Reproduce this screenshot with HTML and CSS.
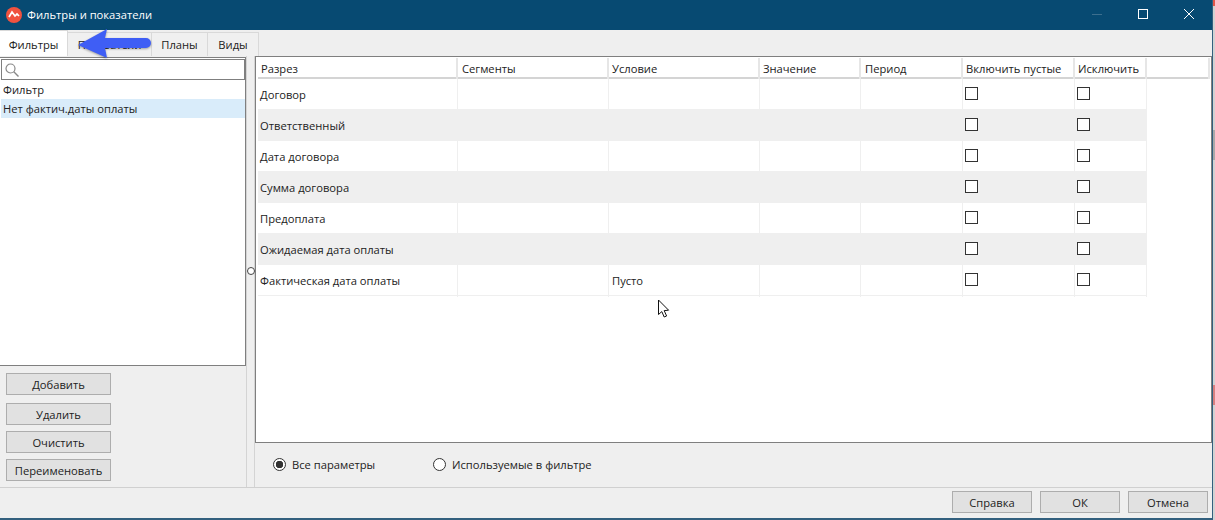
FILE: index.html
```html
<!DOCTYPE html>
<html lang="ru">
<head>
  <meta charset="UTF-8" />
  <title>Фильтры и показатели</title>
  <link rel="stylesheet" href="styles.css">
</head>
<body>
  <div class="window">
    <div class="titlebar">
      <svg class="app-icon" width="16" height="16" viewBox="0 0 16 16">
        <circle cx="8" cy="8" r="8" fill="#f0523f"/>
        <polyline points="3,10 6,5 9,9 11,7 13,9" fill="none" stroke="#fff" stroke-width="1.7"/>
      </svg>
      <span class="title">Фильтры и показатели</span>
      <div class="win-controls">
        <svg class="win-btn" width="46" height="30" viewBox="0 0 46 30"><line x1="18" y1="14.5" x2="28" y2="14.5" stroke="#3d6f8e"/></svg>
        <svg class="win-btn" width="46" height="30" viewBox="0 0 46 30"><rect x="18.5" y="9.5" width="9" height="9" fill="none" stroke="#fff"/></svg>
        <svg class="win-btn" width="46" height="30" viewBox="0 0 46 30"><path d="M18 9l10 10M28 9L18 19" fill="none" stroke="#fff"/></svg>
      </div>
    </div>

    <div class="tabs">
      <div class="tab active tab-filters">Фильтры</div>
      <div class="tab tab-metrics">Показатели</div>
      <div class="tab tab-plans">Планы</div>
      <div class="tab tab-views">Виды</div>
    </div>

    <div class="main">
      <div class="left">
        <div class="list-box">
          <div class="search">
            <svg width="14" height="14" viewBox="0 0 14 14"><circle cx="5.5" cy="5.5" r="4.5" fill="none" stroke="#888" stroke-width="1.2"/><line x1="8.8" y1="8.8" x2="13.5" y2="13.5" stroke="#888" stroke-width="1.4"/></svg>
          </div>
          <div class="list-item">Фильтр</div>
          <div class="list-item selected">Нет фактич.даты оплаты</div>
        </div>
        <div class="list-buttons">
          <button class="btn btn-add">Добавить</button>
          <button class="btn">Удалить</button>
          <button class="btn">Очистить</button>
          <button class="btn">Переименовать</button>
        </div>
      </div>

      <div class="sash"><span class="sash-grip"></span></div>

      <div class="right">
        <div class="table-box">
          <div class="grid grid-head">
            <div>Разрез</div>
            <div class="head-wide">Сегменты</div>
            <div>Условие</div>
            <div>Значение</div>
            <div class="head-wide">Период</div>
            <div>Включить пустые</div>
            <div>Исключить</div>
            <div></div>
          </div>
          <div class="grid row">
            <div>Договор</div><div></div><div></div><div></div><div></div>
            <div><span class="check"></span></div><div><span class="check"></span></div>
          </div>
          <div class="grid row alt">
            <div>Ответственный</div><div></div><div></div><div></div><div></div>
            <div><span class="check"></span></div><div><span class="check"></span></div>
          </div>
          <div class="grid row">
            <div>Дата договора</div><div></div><div></div><div></div><div></div>
            <div><span class="check"></span></div><div><span class="check"></span></div>
          </div>
          <div class="grid row alt">
            <div>Сумма договора</div><div></div><div></div><div></div><div></div>
            <div><span class="check"></span></div><div><span class="check"></span></div>
          </div>
          <div class="grid row">
            <div>Предоплата</div><div></div><div></div><div></div><div></div>
            <div><span class="check"></span></div><div><span class="check"></span></div>
          </div>
          <div class="grid row alt">
            <div>Ожидаемая дата оплаты</div><div></div><div></div><div></div><div></div>
            <div><span class="check"></span></div><div><span class="check"></span></div>
          </div>
          <div class="grid row">
            <div>Фактическая дата оплаты</div><div></div><div>Пусто</div><div></div><div></div>
            <div><span class="check"></span></div><div><span class="check"></span></div>
          </div>
        </div>
        <div class="radios">
          <label class="radio-label radio-all"><span class="radio on"></span>Все параметры</label>
          <label class="radio-label"><span class="radio"></span>Используемые в фильтре</label>
        </div>
      </div>
    </div>

    <div class="footer">
      <button class="btn btn-foot">Справка</button>
      <button class="btn btn-foot">ОК</button>
      <button class="btn btn-foot">Отмена</button>
    </div>
  </div>

  <!-- стрелка и курсор поверх окна -->
  <svg class="arrow" width="75" height="32" viewBox="0 0 75 32">
    <path d="M1 17L30 1L28 10L69 10A5 5 0 0 1 69 20L28 20L30 30Z" fill="#3f5ef5"/>
  </svg>
  <svg class="cursor" width="13" height="20" viewBox="0 0 13 20">
    <path d="M1.5 1L1.5 15.5L4.8 12.6L7.2 18L9.6 17L7.2 11.6L11.6 11.2Z" fill="#fff" stroke="#111" stroke-width="1"/>
  </svg>
</body>
</html>
```
FILE: styles.css
```css
* {
  box-sizing: border-box;
  margin: 0;
  padding: 0;
}

html, body {
  width: 1215px;
  height: 520px;
  overflow: hidden;
}

body {
  position: relative;
  background: linear-gradient(to bottom, #e2574a 0, #e2574a 6px, #d2d2d2 6px, #d2d2d2 130px, #a9a9a9 130px, #a9a9a9 160px, #d2d2d2 160px, #d2d2d2 385px, #d98080 385px, #d98080 405px, #d2d2d2 405px);
  font-family: 'Open Sans', 'Noto Sans', sans-serif;
  font-size: 11.2px;
  color: #222;
}

.window {
  width: 1213px;
  height: 520px;
  display: flex;
  flex-direction: column;
  background-color: #efefef;
  border-right: 1px solid #33607e;
  border-bottom: 2px solid #33607e;
}

.titlebar {
  height: 30px;
  flex: none;
  display: flex;
  align-items: center;
  padding-left: 6px;
  background-color: #074a72;
  color: #fff;
}

.app-icon {
  margin-right: 5px;
}

.title {
  margin-bottom: 2px;
}

.win-controls {
  display: flex;
  margin-left: auto;
}

.win-btn {
  display: block;
}

.tabs {
  height: 26px;
  flex: none;
  display: flex;
  align-items: flex-end;
}

.tab {
  height: 24px;
  line-height: 24px;
  text-align: center;
  background-color: #f0f0f0;
  border: 1px solid #d9d9d9;
  border-bottom: none;
  border-left: none;
}

.tab.active {
  height: 26px;
  line-height: 28px;
  background-color: #fff;
}

.tab-filters { width: 68px; }
.tab-metrics { width: 84px; }
.tab-plans { width: 56px; }
.tab-views { width: 51px; }

.main {
  flex: 1;
  display: flex;
  min-height: 0;
}

.left {
  width: 247px;
  flex: none;
  display: flex;
  flex-direction: column;
  border-right: 1px solid #d4d4d4;
}

.list-box {
  height: 309px;
  flex: none;
  margin-top: 1px;
  padding: 1px 0 0 0;
  background-color: #fff;
  border: 1px solid #7f7f7f;
  border-left: none;
}

.search {
  height: 21px;
  display: flex;
  align-items: center;
  padding-left: 3px;
  border: 1px solid #7f7f7f;
  margin-left: 1px;
  margin-bottom: 1px;
}

.list-item {
  height: 18px;
  line-height: 18px;
  padding-left: 2px;
  margin-left: 1px;
}

.list-item.selected {
  height: 19px;
  line-height: 20px;
  background-color: #d9ecfa;
}

.list-buttons {
  display: flex;
  flex-direction: column;
  align-items: flex-start;
  gap: 6px;
  padding: 7px 0 0 6px;
}

.btn {
  width: 105px;
  height: 22px;
  font-family: inherit;
  font-size: 11.2px;
  color: #222;
  background-color: #e1e1e1;
  border: 1px solid #adadad;
}

.btn-add {
  margin-bottom: 2px;
}

.sash {
  width: 8px;
  flex: none;
  position: relative;
}

.sash-grip {
  position: absolute;
  left: 0;
  top: 211px;
  width: 8px;
  height: 8px;
  border: 1px solid #444;
  border-radius: 50%;
  background-color: #fff;
}

.right {
  flex: 1;
  display: flex;
  flex-direction: column;
  min-width: 0;
  border-left: 1px solid #d4d4d4;
  margin-left: -1px;
}

.table-box {
  height: 387px;
  flex: none;
  padding: 1px 1px 0 2px;
  background-color: #fff;
  border: 1px solid #7f7f7f;
}

.grid {
  display: grid;
  grid-template-columns: 200px 151px 151px 101px 102px 112px 72px 63px;
}

.grid-head {
  height: 21px;
  line-height: 21px;
  border-bottom: 2px solid #d4d4d4;
}

.grid-head > div {
  padding-left: 3px;
  border-right: 2px solid #e6e6e6;
}

.grid-head > .head-wide {
  padding-left: 4px;
}

.row {
  height: 31px;
  line-height: 32px;
  width: 889px;
  grid-template-columns: 200px 151px 151px 101px 102px 112px 72px;
  border-bottom: 1px solid #efefef;
}

.row > div {
  padding-left: 2px;
  border-right: 1px solid #efefef;
}

.row > div:nth-child(3) {
  padding-left: 3px;
}

.row.alt {
  background-color: #efefef;
}

.check {
  display: block;
  width: 13px;
  height: 13px;
  margin-top: 8px;
  background-color: #fff;
  border: 1px solid #333;
}

.radios {
  flex: 1;
  display: flex;
  align-items: center;
  padding: 0 0 2px 18px;
}

.radio-label {
  display: flex;
  align-items: center;
}

.radio-all {
  width: 160px;
}

.radio {
  width: 13px;
  height: 13px;
  margin-right: 6px;
  border: 1px solid #333;
  border-radius: 50%;
  background-color: #fff;
}

.radio.on {
  background: radial-gradient(circle, #333 0, #333 3.5px, #fff 4px);
}

.footer {
  height: 31px;
  flex: none;
  display: flex;
  align-items: center;
  justify-content: flex-end;
  gap: 8px;
  padding: 0 4px 2px 0;
  border-top: 1px solid #d0d0d0;
}

.btn-foot {
  width: 80px;
}

.arrow {
  position: absolute;
  left: 77px;
  top: 28px;
  filter: drop-shadow(0 1px 1px rgba(0, 0, 0, 0.35));
}

.cursor {
  position: absolute;
  left: 657px;
  top: 299px;
}
```
